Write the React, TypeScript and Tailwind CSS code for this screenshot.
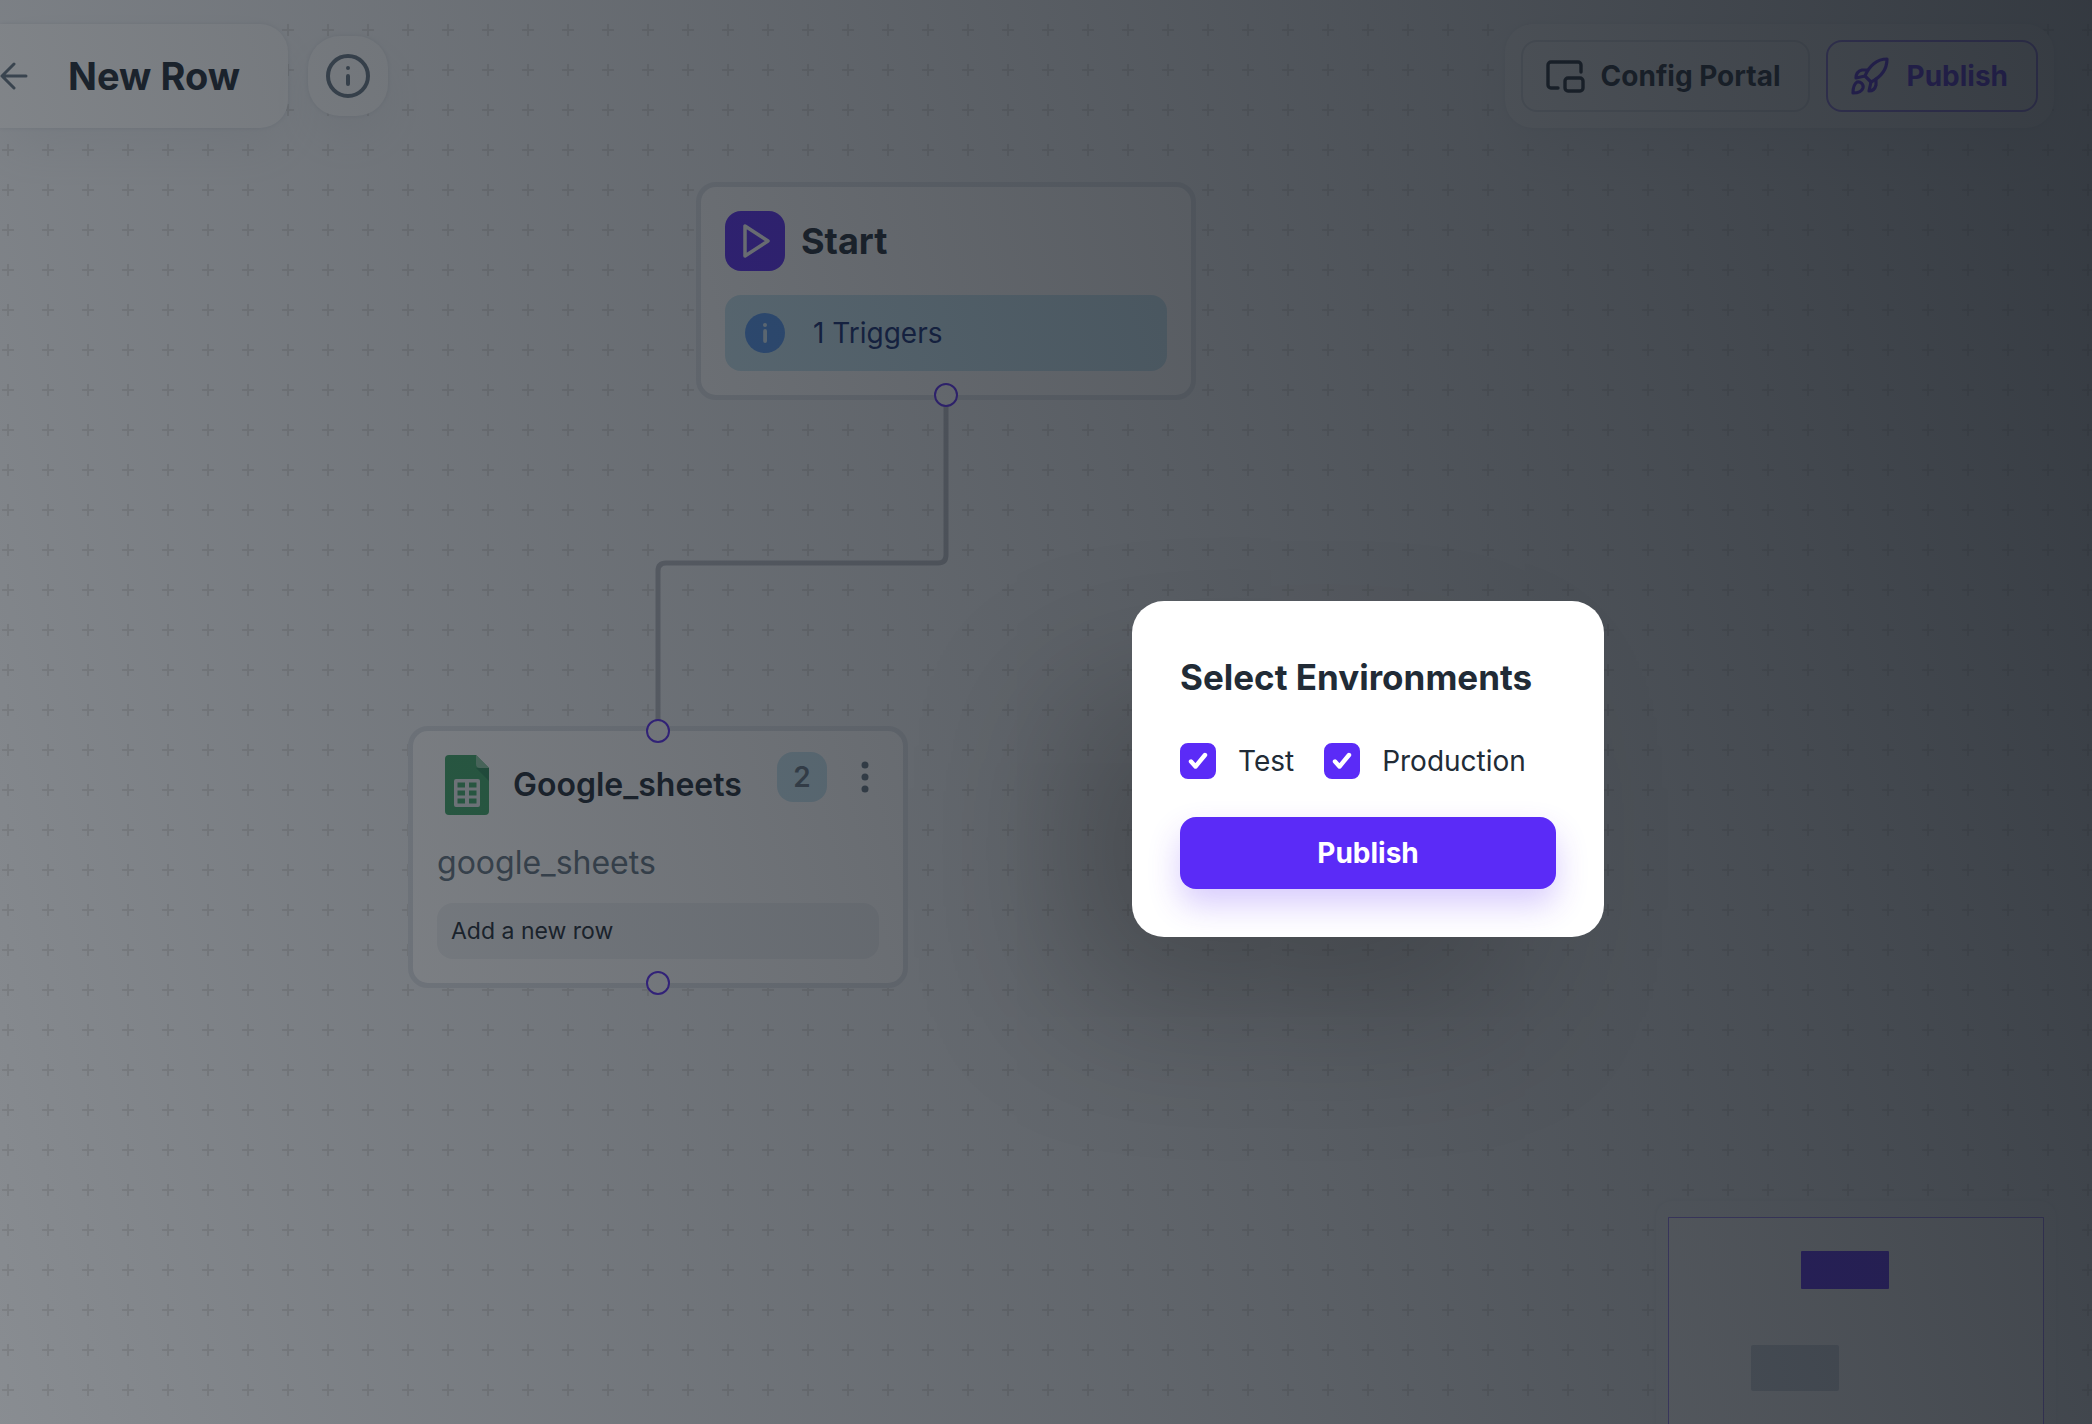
import { useState } from "react";

interface EnvironmentOption {
  id: string;
  label: string;
}

const environments: EnvironmentOption[] = [
  { id: "test", label: "Test" },
  { id: "production", label: "Production" },
];

function Handle({ className }: { className: string }) {
  return (
    <span
      className={`absolute left-1/2 size-6 -translate-x-1/2 rounded-full border-2 border-[#5b2bf7] bg-white ${className}`}
    />
  );
}

function InfoFilledIcon() {
  return (
    <svg viewBox="0 0 40 40" className="size-10 shrink-0" aria-hidden="true">
      <circle cx="20" cy="20" r="20" fill="#5496f0" />
      <circle cx="20" cy="12" r="2" fill="#d6ecfb" />
      <rect x="18.2" y="16" width="3.8" height="14" rx="1.9" fill="#d6ecfb" />
    </svg>
  );
}

function SheetsIcon() {
  return (
    <svg viewBox="0 0 60 60" className="size-15 shrink-0" aria-hidden="true">
      <path d="M12 0h27l13 13v43a4 4 0 0 1-4 4H12a4 4 0 0 1-4-4V4a4 4 0 0 1 4-4z" fill="#3fa568" />
      <path d="M39 13l13 13V13z" fill="#2f8a5a" />
      <path d="M39 0l13 13H43a4 4 0 0 1-4-4z" fill="#8cc8a4" />
      <path
        fillRule="evenodd"
        fill="#e4e8ea"
        d="M19 24h22a2 2 0 0 1 2 2v24a2 2 0 0 1-2 2H19a2 2 0 0 1-2-2V26a2 2 0 0 1 2-2zM20.500 27.500v5h7.500v-5zM32 27.500v5h7.500v-5zM20.500 35.500v5h7.500v-5zM32 35.500v5h7.500v-5zM20.500 43.500v5h7.500v-5zM32 43.500v5h7.500v-5z"
      />
    </svg>
  );
}

function Header() {
  return (
    <header className="relative flex items-center justify-between pt-6 pr-[38px]">
      <div className="flex items-center gap-5">
        <div className="flex h-26 items-center gap-10 rounded-r-[28px] bg-[#fcfdfd] pr-12 shadow-[0_0_4px_rgba(145,158,171,0.24),0_24px_48px_-8px_rgba(145,158,171,0.1)]">
          <button type="button" aria-label="Back" className="text-[#637381]">
            <svg viewBox="0 0 28 28" className="size-7" fill="none" stroke="currentColor" strokeWidth="3" strokeLinecap="round" strokeLinejoin="round">
              <path d="M26 14H2M14 2L2 14l12 12" />
            </svg>
          </button>
          <h1 className="text-[38px] leading-15 font-bold whitespace-nowrap">New Row</h1>
        </div>
        <button
          type="button"
          aria-label="Info"
          className="flex size-20 items-center justify-center rounded-[32px] bg-[#fcfdfd] text-[#637381] shadow-[0_0_4px_rgba(145,158,171,0.24),0_24px_48px_-8px_rgba(145,158,171,0.1)]"
        >
          <svg viewBox="0 0 44 44" className="size-11" fill="none" stroke="currentColor" strokeWidth="4" strokeLinecap="round">
            <circle cx="22" cy="22" r="20" />
            <path d="M22 22v8M22 14v0.010" />
          </svg>
        </button>
      </div>
      <div className="flex items-center gap-4 rounded-[28px] bg-[#fcfdfd] p-4 shadow-[0_0_4px_rgba(145,158,171,0.16),0_24px_48px_-8px_rgba(145,158,171,0.1)]">
        <button type="button" className="flex h-18 items-center gap-4 rounded-2xl border-2 border-[#dfe3e8] pr-7 pl-5.5 text-[28px] font-bold whitespace-nowrap">
          <svg viewBox="0 0 40 40" className="size-10" fill="none" stroke="currentColor" strokeWidth="3.400" strokeLinecap="round" strokeLinejoin="round" aria-hidden="true">
            <path d="M13 32H6a3 3 0 0 1-3-3V9a3 3 0 0 1 3-3h27a3 3 0 0 1 3 3v7" />
            <rect x="20" y="22" width="18" height="13" rx="3" />
          </svg>
          Config Portal
        </button>
        <button type="button" className="flex h-18 items-center gap-4 rounded-2xl border-2 border-[#5b2bf7]/60 pr-7 pl-5.5 text-[28px] font-bold whitespace-nowrap text-[#5b2bf7]">
          <svg viewBox="0 0 40 40" className="size-10" fill="none" stroke="currentColor" strokeWidth="3.200" strokeLinecap="round" strokeLinejoin="round" aria-hidden="true">
            <path d="M15 20C19 10 27 3 37 3c0 10-6 18-16 23z" />
            <path d="M17 14h-5c-4 1-6 4-6 8l9-2M26 23v6c-1 4-4 6-7 6l2-9" />
            <path d="M3 37c0-5 1-9 4-11 3-1 7 2 6 6-1 3-5 5-10 5z" />
          </svg>
          Publish
        </button>
      </div>
    </header>
  );
}

function StartNode() {
  return (
    <article className="absolute top-[182px] left-[696px] flex w-[500px] flex-col gap-6 rounded-[20px] border-5 border-[#dfe3e8] bg-white p-6">
      <div className="flex items-center gap-4">
        <span className="flex size-15 items-center justify-center rounded-2xl bg-[#5b2bf7]">
          <svg viewBox="0 0 60 60" className="size-15" fill="none" stroke="#fff" strokeWidth="3.500" strokeLinejoin="round" aria-hidden="true">
            <path d="M20 15v30l23-15z" />
          </svg>
        </span>
        <h2 className="text-4xl font-bold">Start</h2>
      </div>
      <div className="flex h-19 items-center gap-7 rounded-2xl bg-[#c8e6f2] px-5 text-[28px] text-[#122b74]">
        <InfoFilledIcon />
        <span>1 Triggers</span>
      </div>
      <Handle className="-bottom-3" />
    </article>
  );
}

function SheetsNode() {
  return (
    <article className="absolute top-[726px] left-[408px] w-[500px] rounded-[20px] border-5 border-[#dfe3e8] bg-white p-6">
      <Handle className="-top-3" />
      <div className="flex h-15 items-center">
        <SheetsIcon />
        <h2 className="ml-4 text-[32px] font-semibold">Google_sheets</h2>
        <div className="ml-auto flex items-center gap-4.5 pb-4">
          <span className="flex size-[50px] items-center justify-center rounded-2xl bg-[#c8e6f2] text-[28px] font-semibold text-[#637381]">
            2
          </span>
          <button type="button" aria-label="More" className="-mr-1.5 text-[#637381]">
            <svg viewBox="0 0 40 40" className="size-10" fill="currentColor">
              <circle cx="20" cy="8" r="3.500" />
              <circle cx="20" cy="20" r="3.500" />
              <circle cx="20" cy="32" r="3.500" />
            </svg>
          </button>
        </div>
      </div>
      <p className="mt-6 text-[32px] leading-12 text-[#637381]">google_sheets</p>
      <p className="mt-4 flex h-14 items-center rounded-2xl bg-[#f0f2f4] px-3.5 text-[23px]">Add a new row</p>
      <Handle className="-bottom-3" />
    </article>
  );
}

function Canvas() {
  return (
    <>
      <svg className="absolute inset-0 size-full" aria-hidden="true">
        <defs>
          <pattern id="crosses" x="-12" y="10" width="40" height="40" patternUnits="userSpaceOnUse">
            <path d="M20 14v12M14 20h12" stroke="#dedede" strokeWidth="2" />
          </pattern>
        </defs>
        <rect width="100%" height="100%" fill="url(#crosses)" />
        <path d="M946 395V555q0 8-8 8H666q-8 0-8 8V731" fill="none" stroke="#b9bcc3" strokeWidth="5" />
      </svg>
      <StartNode />
      <SheetsNode />
      <div className="absolute right-9 bottom-0 rounded-t-2xl bg-[#f4f6f8] px-3 pt-4 shadow-[0_0_4px_rgba(145,158,171,0.16)]">
        <svg viewBox="0 0 376 207" className="h-[207px] w-[376px]" aria-hidden="true">
          <path d="M0.500 207V0.500H375.500V207" fill="#fff" stroke="#5b2bf7" strokeOpacity="0.600" />
          <rect x="133" y="34" width="88" height="38" rx="1" fill="#5b2bf7" />
          <rect x="83" y="128" width="88" height="46" rx="2" fill="#d0d7df" />
        </svg>
      </div>
    </>
  );
}

function PublishDialog() {
  const [selected, setSelected] = useState<string[]>(["test", "production"]);

  const toggle = (id: string) => {
    setSelected((prev) => (prev.includes(id) ? prev.filter((e) => e !== id) : [...prev, id]));
  };

  return (
    <div className="absolute inset-0 flex items-center justify-center bg-[linear-gradient(75deg,rgba(22,28,36,0.48)_0%,rgb(22,28,36)_100%)] bg-[length:142%_108%] bg-no-repeat pt-[114px] pl-[644px]">
      <div
        role="dialog"
        aria-labelledby="dialog-title"
        className="flex w-[472px] flex-col rounded-[32px] bg-white p-12 shadow-[-80px_80px_160px_-16px_rgba(0,0,0,0.24)]"
      >
        <h2 id="dialog-title" className="text-[35px] leading-14 font-bold whitespace-nowrap">
          Select Environments
        </h2>
        <div className="mt-9 flex items-center gap-7.5">
          {environments.map((env) => (
            <label key={env.id} className="flex items-center gap-5.5 text-[28px] leading-10">
              <span className="relative flex size-9">
                <input
                  type="checkbox"
                  checked={selected.includes(env.id)}
                  onChange={() => toggle(env.id)}
                  className="peer size-9 appearance-none rounded-lg border-2 border-[#5b2bf7] checked:bg-[#5b2bf7]"
                />
                <svg
                  viewBox="0 0 36 36"
                  className="pointer-events-none absolute inset-0 hidden size-9 peer-checked:block"
                  fill="none"
                  stroke="#fff"
                  strokeWidth="4.400"
                  strokeLinecap="round"
                  strokeLinejoin="round"
                >
                  <path d="M11 18.500l4.500 5L25 12" />
                </svg>
              </span>
              {env.label}
            </label>
          ))}
        </div>
        <button
          type="button"
          className="mt-9 h-18 rounded-2xl bg-[#5b2bf7] text-[28px] font-bold text-white shadow-[0_16px_32px_rgba(91,43,247,0.24)]"
        >
          Publish
        </button>
      </div>
    </div>
  );
}

export default function App() {
  return (
    <div className="relative min-h-screen overflow-hidden bg-[#f4f6f8] font-['Inter',sans-serif] text-[#212b36]">
      <Canvas />
      <Header />
      <PublishDialog />
    </div>
  );
}
